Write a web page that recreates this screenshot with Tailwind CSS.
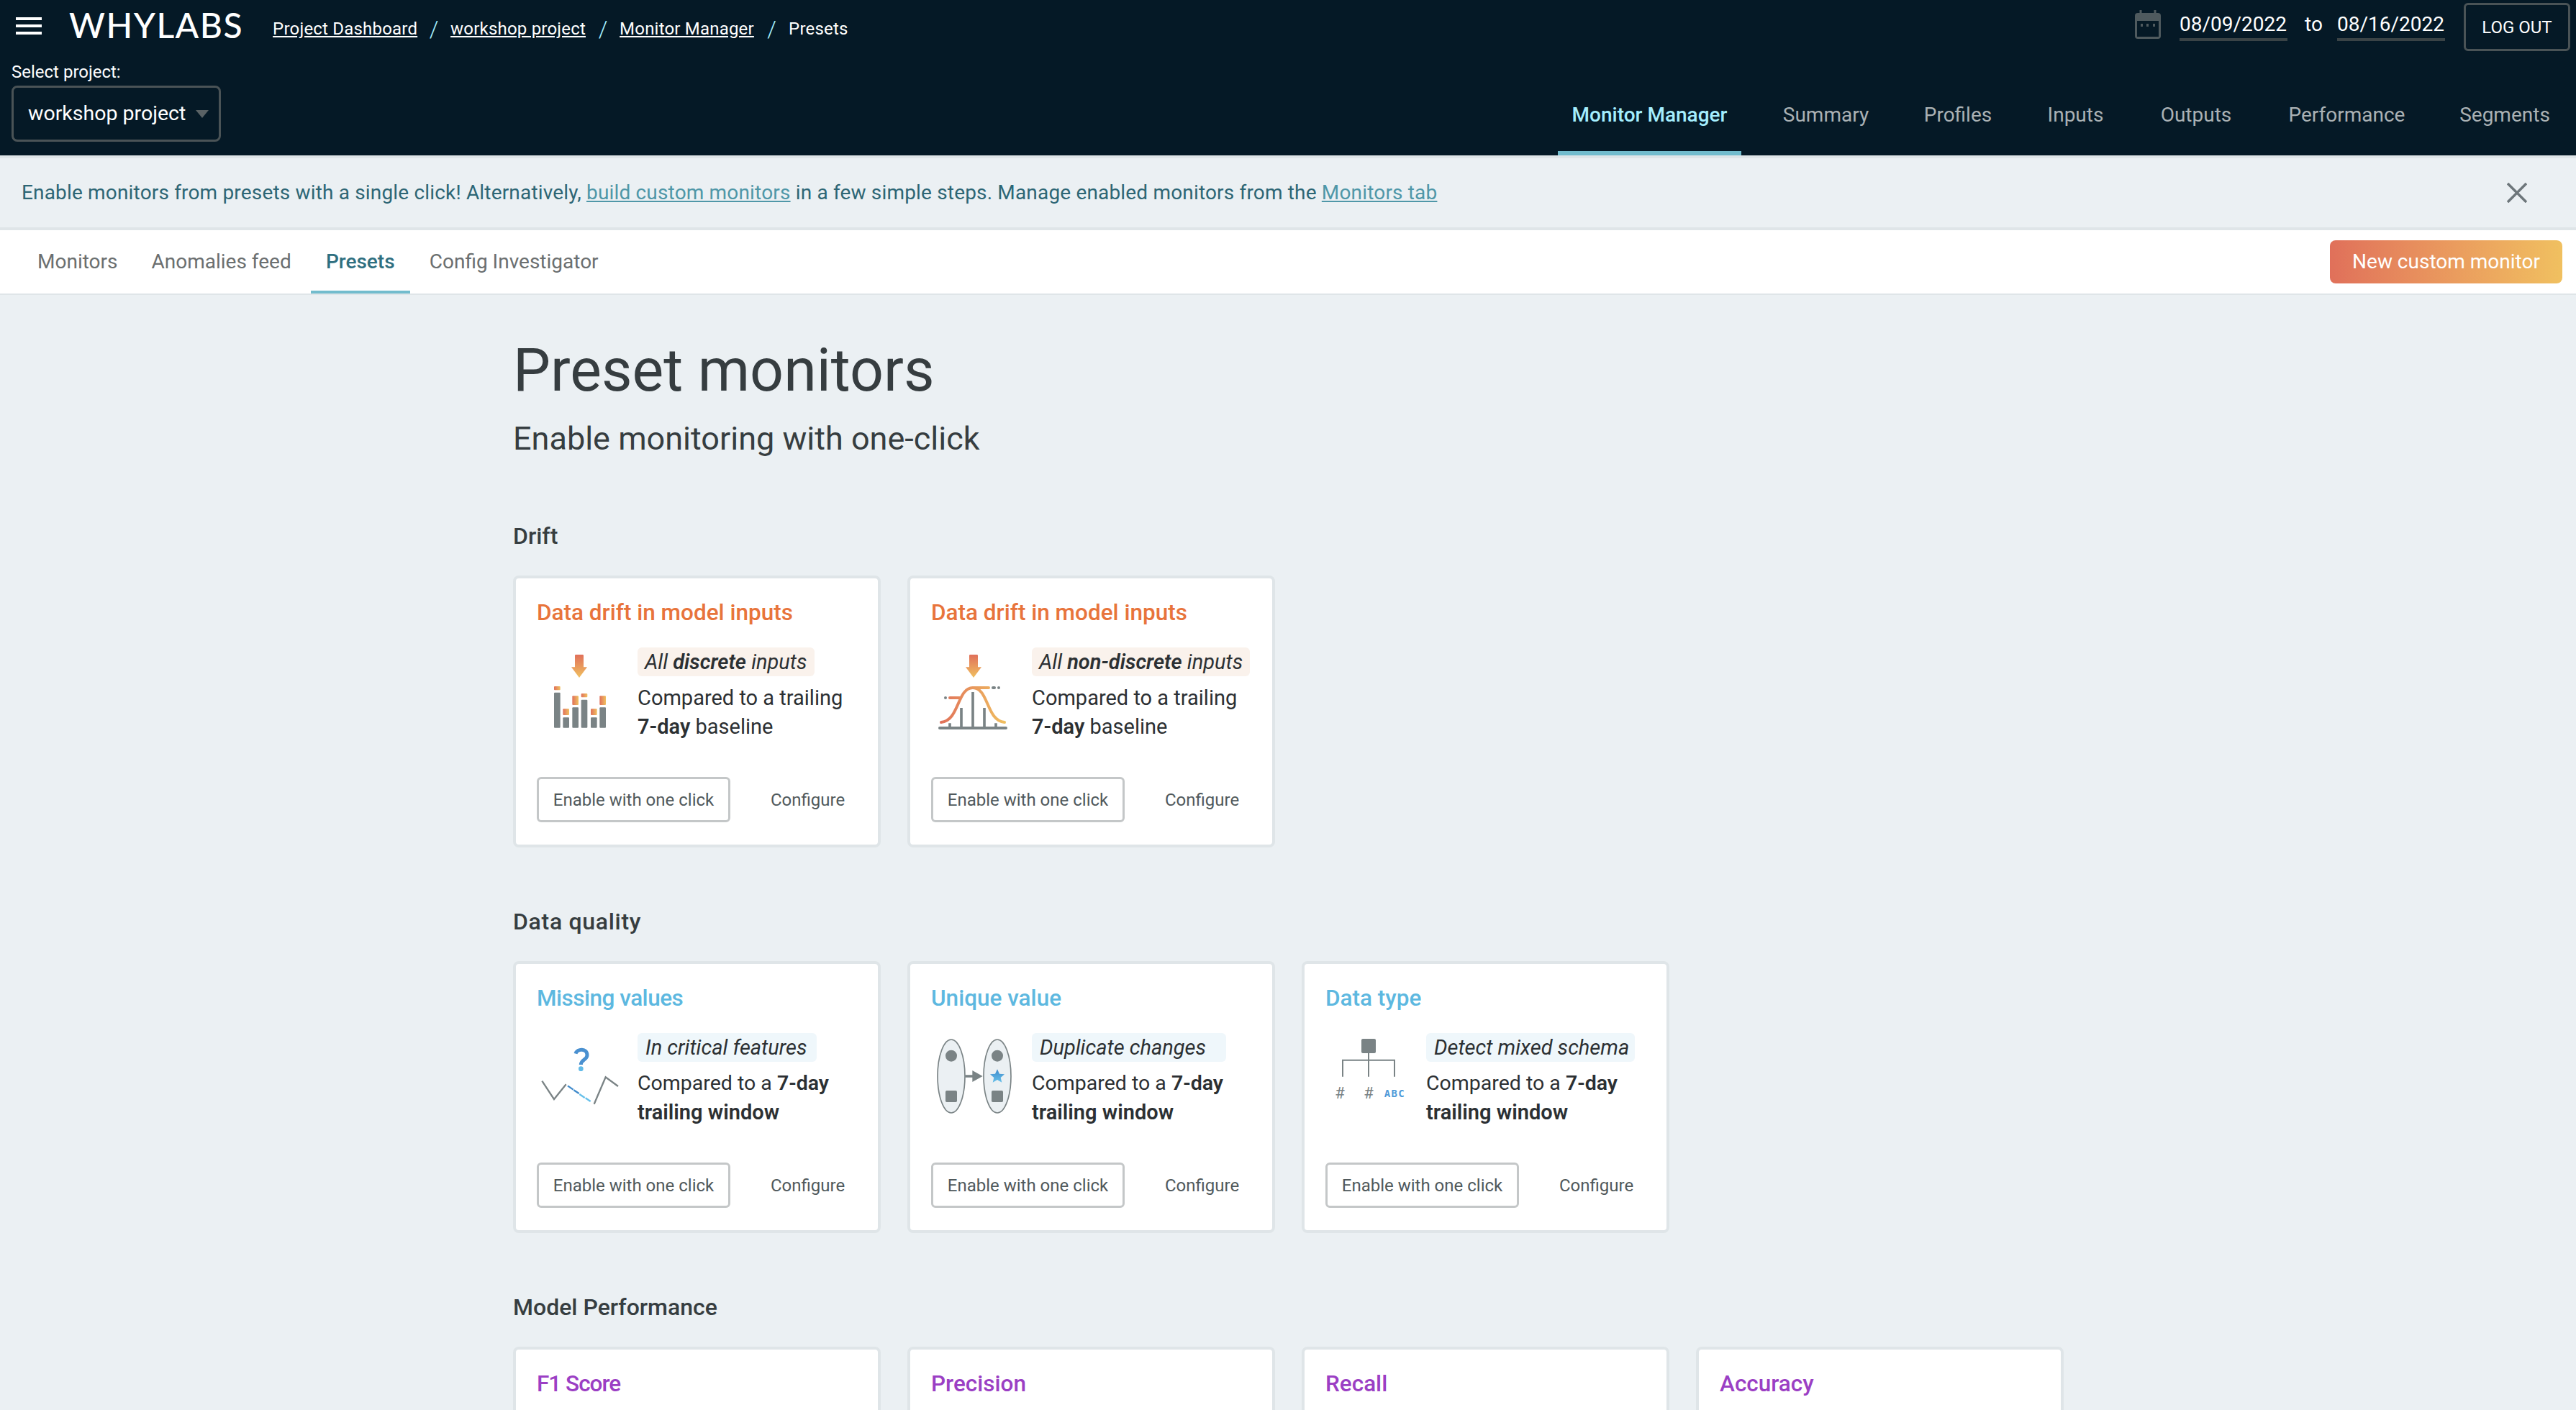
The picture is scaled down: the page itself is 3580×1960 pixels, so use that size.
<!DOCTYPE html>
<html>
<head>
<meta charset="utf-8">
<title>Presets</title>
<script src="https://cdn.jsdelivr.net/npm/@tailwindcss/browser@4"></script>
</head>
<body class="w-[3580px] h-[1960px] overflow-hidden bg-[#ebf0f3] font-['Roboto',sans-serif] text-[#2c3033]">

<svg class="absolute w-0 h-0">
  <defs>
    <linearGradient id="warm-v" x1="0" y1="0" x2="0" y2="1"><stop offset="0" stop-color="#e0705a"/><stop offset="1" stop-color="#f0c060"/></linearGradient>
    <linearGradient id="warm-h" x1="0" y1="0" x2="1" y2="0"><stop offset="0" stop-color="#e0705a"/><stop offset="1" stop-color="#f0c060"/></linearGradient>
    <linearGradient id="warm-curve" gradientUnits="userSpaceOnUse" x1="108" y1="0" x2="384" y2="0"><stop offset="0" stop-color="#e0705a"/><stop offset="1" stop-color="#f0c060"/></linearGradient>
    <linearGradient id="cool-v" x1="0" y1="0" x2="0" y2="1"><stop offset="0" stop-color="#3f8acb"/><stop offset="1" stop-color="#66c0ea"/></linearGradient>
  </defs>
</svg>

<!-- header -->
<header class="relative h-[216px] bg-[#051926] text-white">
  <div class="flex justify-between">
    <div class="flex items-start">
      <button class="ml-[22px] mt-[24px] flex flex-col gap-[6px] w-[36px]">
        <span class="h-[4px] bg-white"></span>
        <span class="h-[4px] bg-white"></span>
        <span class="h-[4px] bg-white"></span>
      </button>
      <span class="ml-[38px] mt-[10px] font-[Lato] font-medium text-[48px] leading-[50px] tracking-[1.5px]">WHYLABS</span>
      <nav class="ml-[41px] mt-[24px] flex whitespace-nowrap text-[24px] tracking-[0.2px] leading-[32px]">
        <a class="underline w-[201px]">Project Dashboard</a>
        <span class="w-[46px] text-center text-[32px] font-light text-[#a4eefe]">/</span>
        <a class="underline w-[189px]">workshop project</a>
        <span class="w-[46px] text-center text-[32px] font-light text-[#a4eefe]">/</span>
        <a class="underline w-[188px]">Monitor Manager</a>
        <span class="w-[47px] text-center text-[32px] font-light text-[#a4eefe]">/</span>
        <span>Presets</span>
      </nav>
    </div>
    <div class="flex items-start pr-[8px] pt-[4px]">
      <svg class="mt-[10px] w-[36px] h-[40px]" viewBox="0 0 36 40">
        <path d="M8 0v5M28 0v5" stroke="#4f5a5e" stroke-width="3"/>
        <rect x="0" y="4" width="36" height="36" rx="4" fill="#4f5a5e"/>
        <rect x="3" y="15" width="30" height="22" fill="#051926"/>
        <path d="M8 19h3v4H8zM16 19h3v4h-3zM25 19h3v4h-3z" fill="#4f5a5e"/>
      </svg>
      <span class="ml-[26px] w-[150px] h-[53px] border-b-[4px] border-[#3a4346] text-[28px] leading-[60px]">08/09/2022</span>
      <span class="ml-[24px] w-[45px] text-[28px] leading-[60px]">to</span>
      <span class="w-[150px] h-[53px] border-b-[4px] border-[#3a4346] text-[28px] leading-[60px]">08/16/2022</span>
      <button class="ml-[26px] w-[148px] h-[67px] border-[3px] border-[#4a5356] rounded-[6px] text-[24px]">LOG OUT</button>
    </div>
  </div>
  <div class="absolute left-[16px] top-[86px]">
    <div class="text-[24px] leading-[28px]">Select project:</div>
    <div class="mt-[5px] flex items-center justify-between w-[291px] h-[78px] pl-[20px] pr-[14px] border-[3px] border-[#4a5356] rounded-[8px] text-[28.5px]">
      <span>workshop project</span>
      <span class="w-0 h-0 border-x-[9px] border-x-transparent border-t-[11px] border-t-[#5a6265]"></span>
    </div>
  </div>
  <nav class="absolute right-[19px] bottom-0 flex gap-[40px] text-[28px] text-[#aab1b4]">
    <a class="h-[96px] w-[255px] pb-[10px] flex items-center justify-center border-b-[6px] border-[#72bccd] text-[#a4eefe] font-medium">Monitor Manager</a>
    <a class="h-[96px] w-[155px] pb-[10px] flex items-center justify-center border-b-[6px] border-transparent">Summary</a>
    <a class="h-[96px] w-[132px] pb-[10px] flex items-center justify-center border-b-[6px] border-transparent">Profiles</a>
    <a class="h-[96px] w-[115px] pb-[10px] flex items-center justify-center border-b-[6px] border-transparent">Inputs</a>
    <a class="h-[96px] w-[140px] pb-[10px] flex items-center justify-center border-b-[6px] border-transparent">Outputs</a>
    <a class="h-[96px] w-[199px] pb-[10px] flex items-center justify-center border-b-[6px] border-transparent">Performance</a>
    <a class="h-[96px] w-[160px] pb-[10px] flex items-center justify-center border-b-[6px] border-transparent">Segments</a>
  </nav>
</header>

<!-- info banner -->
<div class="flex items-center justify-between h-[104px] pl-[30px] pr-[68px] border-[4px] border-[#dfe5e8] border-x-0 text-[28px] tracking-[0.17px] text-[#2d6675]">
  <p>Enable monitors from presets with a single click! Alternatively, <a class="underline text-[#4f97a8]">build custom monitors</a> in a few simple steps. Manage enabled monitors from the <a class="underline text-[#4f97a8]">Monitors tab</a></p>
  <svg class="w-[28px] h-[28px]" viewBox="0 0 28 28"><path d="M1 1l26 26M27 1L1 27" stroke="#6d767a" stroke-width="3.5"/></svg>
</div>

<!-- sub nav -->
<div class="flex items-center justify-between h-[90px] pl-[32px] pr-[19px] bg-white border-b-[2px] border-[#dfe5e8]">
  <nav class="flex gap-[7px] text-[28px] text-[#6b6f70]">
    <a class="h-[88px] pt-[4px] px-[20px] flex items-center border-b-[4px] border-transparent">Monitors</a>
    <a class="h-[88px] pt-[4px] px-[20px] flex items-center border-b-[4px] border-transparent">Anomalies feed</a>
    <a class="h-[88px] pt-[4px] w-[138px] flex items-center justify-center border-b-[4px] border-[#72bccd] text-[#2f6f80] font-medium">Presets</a>
    <a class="h-[88px] pt-[4px] px-[20px] flex items-center border-b-[4px] border-transparent">Config Investigator</a>
  </nav>
  <button class="w-[323px] h-[60px] rounded-[8px] bg-linear-to-r from-[#e0705a] to-[#f0c060] text-white text-[28px]">New custom monitor</button>
</div>

<!-- presets -->
<main class="pl-[713px]">
  <h1 class="pt-[55px] text-[82.5px] leading-[100px] text-[#363d40]">Preset monitors</h1>
  <h2 class="mt-[17px] text-[45px] leading-[56px] text-[#363d40]">Enable monitoring with one-click</h2>

  <!-- Drift -->
  <h3 class="mt-[87px] text-[32px] leading-[40px] font-medium text-[#363d40]">Drift</h3>
  <div class="mt-[35px] flex gap-[37px]">

    <div class="w-[511px] h-[378px] pt-[28px] pl-[29px] bg-white border-[4px] border-[#dfe5e8] rounded-[8px]">
      <div class="text-[31.5px] leading-[40px] font-medium text-[#e8743b]">Data drift in model inputs</div>
      <div class="mt-[28px] flex">
        <svg class="w-[140px] h-[130px] shrink-0" viewBox="78 60 420 390">
          <path d="M237 94q0-4 4-4h28q4 0 4 4v48h15l-33 44-33-44h15z" fill="url(#warm-v)"/>
          <g fill="#7a8385">
            <rect x="150" y="248" width="26" height="147" rx="3"/>
            <rect x="187" y="352" width="26" height="43" rx="3"/>
            <rect x="226" y="310" width="26" height="85" rx="3"/>
            <rect x="263" y="278" width="26" height="117" rx="3"/>
            <rect x="303" y="352" width="26" height="43" rx="3"/>
            <rect x="340" y="310" width="26" height="85" rx="3"/>
          </g>
          <g fill="url(#warm-h)">
            <rect x="150" y="222" width="26" height="16" rx="3"/>
            <rect x="187" y="316" width="26" height="26" rx="3"/>
            <rect x="226" y="262" width="26" height="38" rx="3"/>
            <rect x="263" y="252" width="26" height="16" rx="3"/>
            <rect x="303" y="316" width="26" height="26" rx="3"/>
            <rect x="340" y="262" width="26" height="38" rx="3"/>
          </g>
        </svg>
        <div class="text-[29px] leading-[40px]">
          <div class="mb-[10px] w-fit px-[10px] rounded-[6px] bg-[#faf2ec] italic">All <b class="font-semibold">discrete</b> inputs</div>
          <div>Compared to a trailing</div>
          <div><b class="font-semibold">7-day</b> baseline</div>
        </div>
      </div>
      <div class="mt-[50px] flex items-center text-[24px] text-[#50595c]">
        <button class="w-[269px] h-[63px] border-[3px] border-[#c4c7c8] rounded-[6px]">Enable with one click</button>
        <button class="ml-[56px]">Configure</button>
      </div>
    </div>

    <div class="w-[511px] h-[378px] pt-[28px] pl-[29px] bg-white border-[4px] border-[#dfe5e8] rounded-[8px]">
      <div class="text-[31.5px] leading-[40px] font-medium text-[#e8743b]">Data drift in model inputs</div>
      <div class="mt-[28px] flex">
        <svg class="w-[140px] h-[130px] shrink-0" viewBox="72 60 420 390">
          <path d="M231 94q0-4 4-4h28q4 0 4 4v48h15l-33 44-33-44h15z" fill="url(#warm-v)"/>
          <path d="M150 376v20M198 312v84M246 246v150M294 312v84M342 376v20" stroke="#7a8385" stroke-width="11" fill="none"/>
          <path d="M108 396h276" stroke="#7a8385" stroke-width="12" stroke-linecap="round"/>
          <path d="M114 372C190 366 180 228 246 228C312 228 302 366 378 372" stroke="url(#warm-curve)" stroke-width="12" stroke-linecap="round" fill="none"/>
          <path d="M246 228h66M150 270h42" stroke="url(#warm-curve)" stroke-width="12" stroke-linecap="round" fill="none"/>
          <circle cx="132" cy="270" r="6" fill="#7a8385"/>
          <rect x="324" y="222" width="18" height="12" rx="6" fill="#7a8385"/>
          <circle cx="354" cy="228" r="6" fill="#7a8385"/>
        </svg>
        <div class="text-[29px] leading-[40px]">
          <div class="mb-[10px] w-fit px-[10px] rounded-[6px] bg-[#faf2ec] italic">All <b class="font-semibold">non-discrete</b> inputs</div>
          <div>Compared to a trailing</div>
          <div><b class="font-semibold">7-day</b> baseline</div>
        </div>
      </div>
      <div class="mt-[50px] flex items-center text-[24px] text-[#50595c]">
        <button class="w-[269px] h-[63px] border-[3px] border-[#c4c7c8] rounded-[6px]">Enable with one click</button>
        <button class="ml-[56px]">Configure</button>
      </div>
    </div>
  </div>

  <!-- Data quality -->
  <h3 class="mt-[83px] text-[32px] leading-[40px] font-medium tracking-[0.7px] text-[#363d40]">Data quality</h3>
  <div class="mt-[35px] flex gap-[37px]">

    <div class="w-[511px] h-[378px] pt-[28px] pl-[29px] bg-white border-[4px] border-[#dfe5e8] rounded-[8px]">
      <div class="text-[31.5px] tracking-[-0.5px] leading-[40px] font-medium text-[#5db8e0]">Missing values</div>
      <div class="mt-[28px] flex">
        <svg class="w-[140px] h-[130px] shrink-0" viewBox="78 48 420 390">
          <path d="M240 134C246 112 288 110 288 140C288 160 262 158 262 180" stroke="#4a90d0" stroke-width="15" fill="none"/>
          <circle cx="262" cy="197" r="10" fill="#62bbe8"/>
          <path d="M100 248L150 324L200 262M317 344L365 232L417 270" stroke="#7a8385" stroke-width="7" fill="none"/>
          <path d="M207 268L230 284M232 286L254 300" stroke="#3f8acb" stroke-width="7"/>
          <path d="M256 303L278 318M281 319L302 333" stroke="#66c0ea" stroke-width="7"/>
        </svg>
        <div class="text-[29px] leading-[40px]">
          <div class="mb-[10px] w-[249px] pl-[11px] rounded-[6px] bg-[#eff7fb] italic">In critical features</div>
          <div class="text-[28.5px]">Compared to a <b class="font-semibold">7-day</b></div>
          <div><b class="font-semibold">trailing window</b></div>
        </div>
      </div>
      <div class="mt-[50px] flex items-center text-[24px] text-[#50595c]">
        <button class="w-[269px] h-[63px] border-[3px] border-[#c4c7c8] rounded-[6px]">Enable with one click</button>
        <button class="ml-[56px]">Configure</button>
      </div>
    </div>

    <div class="w-[511px] h-[378px] pt-[28px] pl-[29px] bg-white border-[4px] border-[#dfe5e8] rounded-[8px]">
      <div class="text-[31.5px] leading-[40px] font-medium text-[#5db8e0]">Unique value</div>
      <div class="mt-[28px] flex">
        <svg class="w-[140px] h-[130px] shrink-0" viewBox="72 48 420 390">
          <g fill="#ebf0f3" stroke="#7a8385" stroke-width="5">
            <ellipse cx="156" cy="228" rx="57" ry="153"/>
            <ellipse cx="348" cy="228" rx="57" ry="153"/>
          </g>
          <g fill="#7a8385">
            <circle cx="156" cy="143" r="24"/>
            <rect x="132" y="288" width="48" height="48" rx="5"/>
            <circle cx="348" cy="143" r="24"/>
            <rect x="324" y="288" width="48" height="48" rx="5"/>
            <path d="M214 223h30v-19l43 24-43 24v-19h-30z"/>
          </g>
          <path d="M348 199l9 19 21 2-16 14 5 20-19-11-19 11 5-20-16-14 21-2z" fill="url(#cool-v)"/>
        </svg>
        <div class="text-[29px] leading-[40px]">
          <div class="mb-[10px] w-[270px] pl-[11px] rounded-[6px] bg-[#eff7fb] italic">Duplicate changes</div>
          <div class="text-[28.5px]">Compared to a <b class="font-semibold">7-day</b></div>
          <div><b class="font-semibold">trailing window</b></div>
        </div>
      </div>
      <div class="mt-[50px] flex items-center text-[24px] text-[#50595c]">
        <button class="w-[269px] h-[63px] border-[3px] border-[#c4c7c8] rounded-[6px]">Enable with one click</button>
        <button class="ml-[56px]">Configure</button>
      </div>
    </div>

    <div class="w-[511px] h-[378px] pt-[28px] pl-[29px] bg-white border-[4px] border-[#dfe5e8] rounded-[8px]">
      <div class="text-[31.5px] leading-[40px] font-medium text-[#5db8e0]">Data type</div>
      <div class="mt-[28px] flex">
        <svg class="w-[140px] h-[130px] shrink-0" viewBox="66 48 420 390">
          <rect x="216" y="72" width="60" height="60" rx="6" fill="#7a8385"/>
          <path d="M246 132v98M138 230v-69h216v69" stroke="#7a8385" stroke-width="6" fill="none"/>
          <text x="126" y="322" text-anchor="middle" font-size="66" fill="#7a8385" font-family="Roboto">#</text>
          <text x="246" y="322" text-anchor="middle" font-size="66" fill="#7a8385" font-family="Roboto">#</text>
          <text x="355" y="316" text-anchor="middle" font-size="42" font-weight="900" letter-spacing="4" fill="#4f9bd9" font-family="DejaVu Sans Mono">ABC</text>
        </svg>
        <div class="text-[29px] leading-[40px]">
          <div class="mb-[10px] w-[290px] pl-[11px] rounded-[6px] bg-[#eff7fb] italic">Detect mixed schema</div>
          <div class="text-[28.5px]">Compared to a <b class="font-semibold">7-day</b></div>
          <div><b class="font-semibold">trailing window</b></div>
        </div>
      </div>
      <div class="mt-[50px] flex items-center text-[24px] text-[#50595c]">
        <button class="w-[269px] h-[63px] border-[3px] border-[#c4c7c8] rounded-[6px]">Enable with one click</button>
        <button class="ml-[56px]">Configure</button>
      </div>
    </div>
  </div>

  <!-- Model Performance -->
  <h3 class="mt-[83px] text-[32px] leading-[40px] font-medium text-[#363d40]">Model Performance</h3>
  <div class="mt-[35px] flex gap-[37px]">
    <div class="w-[511px] h-[378px] pt-[28px] pl-[29px] bg-white border-[4px] border-[#dfe5e8] rounded-[8px]">
      <div class="text-[31.5px] tracking-[-1px] leading-[40px] font-medium text-[#9b3fc4]">F1 Score</div>
    </div>
    <div class="w-[511px] h-[378px] pt-[28px] pl-[29px] bg-white border-[4px] border-[#dfe5e8] rounded-[8px]">
      <div class="text-[31.5px] leading-[40px] font-medium text-[#9b3fc4]">Precision</div>
    </div>
    <div class="w-[511px] h-[378px] pt-[28px] pl-[29px] bg-white border-[4px] border-[#dfe5e8] rounded-[8px]">
      <div class="text-[31.5px] leading-[40px] font-medium text-[#9b3fc4]">Recall</div>
    </div>
    <div class="w-[511px] h-[378px] pt-[28px] pl-[29px] bg-white border-[4px] border-[#dfe5e8] rounded-[8px]">
      <div class="text-[31.5px] leading-[40px] font-medium text-[#9b3fc4]">Accuracy</div>
    </div>
  </div>
</main>

</body>
</html>
